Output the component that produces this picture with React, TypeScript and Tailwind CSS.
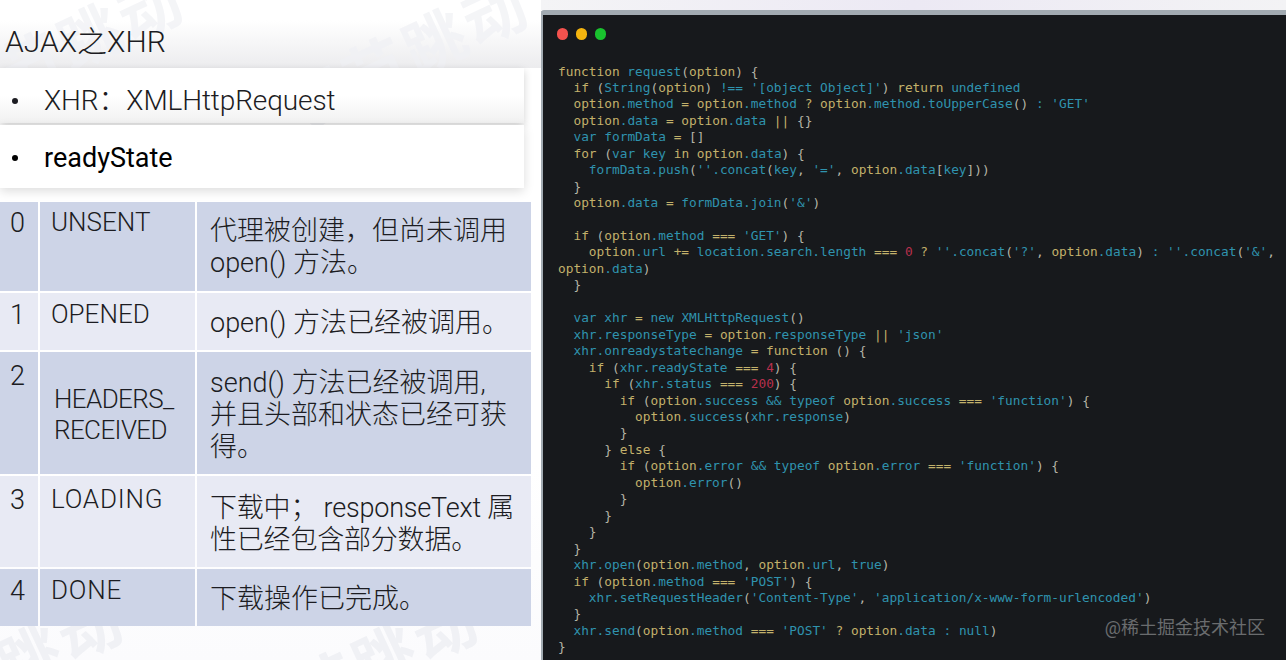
const code = `function request(option) {
  if (String(option) !== '[object Object]') return undefined
  option.method = option.method ? option.method.toUpperCase() : 'GET'
  option.data = option.data || {}
  var formData = []
  for (var key in option.data) {
    formData.push(''.concat(key, '=', option.data[key]))
  }
  option.data = formData.join('&')

  if (option.method === 'GET') {
    option.url += location.search.length === 0 ? ''.concat('?', option.data) : ''.concat('&',
option.data)
  }

  var xhr = new XMLHttpRequest()
  xhr.responseType = option.responseType || 'json'
  xhr.onreadystatechange = function () {
    if (xhr.readyState === 4) {
      if (xhr.status === 200) {
        if (option.success && typeof option.success === 'function') {
          option.success(xhr.response)
        }
      } else {
        if (option.error && typeof option.error === 'function') {
          option.error()
        }
      }
    }
  }
  xhr.open(option.method, option.url, true)
  if (option.method === 'POST') {
    xhr.setRequestHeader('Content-Type', 'application/x-www-form-urlencoded')
  }
  xhr.send(option.method === 'POST' ? option.data : null)
}`;

const yellowWords = ["option", "function", "if", "for", "in", "else", "return", "===", "=", "+=", "||", "?"];

function tokenClass(token: string) {
  if (token.startsWith("'")) return "text-[#2f93ae]";
  if (/^\d+$/.test(token)) return "text-[#b8304d]";
  if (yellowWords.includes(token)) return "text-[#c3b16b]";
  if (/^[(){}\[\],]$/.test(token)) return "text-[#b5b4a6]";
  return "text-[#2f93ae]";
}

function CodeLine({ line }: { line: string }) {
  const tokens = line.match(/'[^']*'|\d+|[A-Za-z]+|===|!==|\+=|\|\||&&|\s+|./g) ?? [];
  return (
    <div className="h-[16.457px] whitespace-pre">
      {tokens.map((t, i) => (
        <span key={i} className={tokenClass(t)}>
          {t}
        </span>
      ))}
    </div>
  );
}

const rows = [
  { n: "0", state: ["UNSENT"], trk: "tracking-normal", dtrk: "tracking-normal", desc: ["代理被创建，但尚未调用", "open() 方法。"], h: "h-[89px]", pt: "pt-[5px]", dpt: "pt-[13px]", bg: "bg-[#cdd4e7]" },
  { n: "1", state: ["OPENED"], trk: "tracking-normal", dtrk: "tracking-normal", desc: ["open() 方法已经被调用。"], h: "h-[57px]", pt: "pt-[6px]", dpt: "pt-[14px]", bg: "bg-[#e8eaf4]" },
  { n: "2", state: ["HEADERS_", "RECEIVED"], trk: "tracking-[-0.6px]", dtrk: "tracking-normal", desc: ["send() 方法已经被调用,", "并且头部和状态已经可获", "得。"], h: "h-[122px]", pt: "pt-[8px]", dpt: "pt-[15px]", bg: "bg-[#cdd4e7]" },
  { n: "3", state: ["LOADING"], trk: "tracking-[0.8px]", dtrk: "tracking-[-0.2px]", desc: ["下载中； responseText 属", "性已经包含部分数据。"], h: "h-[91px]", pt: "pt-[8px]", dpt: "pt-[16px]", bg: "bg-[#e8eaf4]" },
  { n: "4", state: ["DONE"], trk: "tracking-[0.8px]", dtrk: "tracking-normal", desc: ["下载操作已完成。"], h: "h-[57px]", pt: "pt-[6px]", dpt: "pt-[14px]", bg: "bg-[#cdd4e7]" },
];

function Watermark({ className }: { className: string }) {
  return (
    <div className={`absolute rotate-[-25deg] whitespace-nowrap text-[62px] font-bold tracking-[4px] text-[#f0f1f5] ${className}`}>
      字节跳动
    </div>
  );
}

export default function App() {
  return (
    <div className="flex h-[660px] w-[1286px] overflow-hidden bg-white font-['Roboto','Noto_Sans_CJK_SC',sans-serif] text-[#1c1c22]">
      <div className="relative w-[541px] shrink-0 overflow-hidden bg-gradient-to-b from-white from-[70%] to-[#fbfbfd]">
        <div className="h-[68px] bg-gradient-to-b from-white from-[30%] to-[#ececee]" />
        <Watermark className="left-[-70px] top-[5px] opacity-70" />
        <Watermark className="left-[275px] top-[10px] opacity-70" />
        <Watermark className="left-[-130px] top-[625px]" />
        <Watermark className="left-[225px] top-[625px]" />

        <div className="absolute left-0 top-0 w-full">
          <h1 className="flex h-[68px] items-center pl-[5px] pt-[16px] text-[30px] font-light leading-none">AJAX之XHR</h1>
          <div className="flex h-[55px] w-[524px] items-center bg-gradient-to-b from-white from-[50%] to-[#f1f1f1] pl-[12px] pt-[11px] text-[28px] font-light tracking-[-0.1px] shadow-[0_3px_8px_rgba(0,0,0,0.18)]">
            <span className="mr-[26px] h-[6px] w-[6px] rounded-full bg-[#1c1c22]" />
            <span>XHR：XMLHttpRequest</span>
          </div>
          <div className="mt-[2px] flex h-[63px] w-[524px] items-center bg-white pl-[12px] pt-[3px] text-[27px] text-black shadow-[0_3px_10px_rgba(0,0,0,0.14)]">
            <span className="mr-[26px] h-[6px] w-[6px] rounded-full bg-black" />
            <span>readyState</span>
          </div>

          <div className="mt-[14px] flex w-[531px] flex-col gap-[2px]">
            {rows.map((r) => (
              <div key={r.n} className={`grid grid-cols-[38px_155px_334px] gap-[2px] ${r.h}`}>
                <div className={`${r.bg} ${r.pt} pl-[10px] text-[27px] font-light leading-[32px]`}>{r.n}</div>
                <div className={`${r.bg} ${r.n === "2" ? "pl-[14px] pt-[32px]" : `${r.pt} pl-[11px]`} ${r.trk} text-[26px] font-light leading-[31px]`}>
                  {r.state.map((s) => (
                    <div key={s}>{s}</div>
                  ))}
                </div>
                <div className={`${r.bg} ${r.dpt} ${r.dtrk} pl-[13px] text-[27px] font-light leading-[32px]`}>
                  {r.desc.map((d) => (
                    <div key={d} className="whitespace-nowrap">{d}</div>
                  ))}
                </div>
              </div>
            ))}
          </div>
        </div>
      </div>

      <div className="flex min-w-0 flex-1 flex-col">
        <div className="h-[10px] shrink-0 bg-gradient-to-r from-[#f4f4f6] via-[#ece9f4] to-[#f3f3f5]" />
        <div className="relative flex-1 rounded-tl-[3px] border-l-[2px] border-t-[5px] border-[#a2abb2] bg-[#17191c] pl-[15px]">
          <div className="-ml-[1.5px] flex gap-[7.5px] pt-[13px]">
            <span className="h-[11.5px] w-[11.5px] rounded-full bg-[#f4524e]" />
            <span className="h-[11.5px] w-[11.5px] rounded-full bg-[#f5b50f]" />
            <span className="h-[11.5px] w-[11.5px] rounded-full bg-[#19c22e]" />
          </div>
          <div className="mt-[24px] font-['DejaVu_Sans_Mono',monospace] text-[12.8px] leading-[16.457px]">
            {code.split("\n").map((line, i) => (
              <CodeLine key={i} line={line} />
            ))}
          </div>
          <div className="absolute bottom-[20px] right-[21px] text-[18px] leading-[24px] text-[#6a6c6e]">@稀土掘金技术社区</div>
        </div>
      </div>
    </div>
  );
}
